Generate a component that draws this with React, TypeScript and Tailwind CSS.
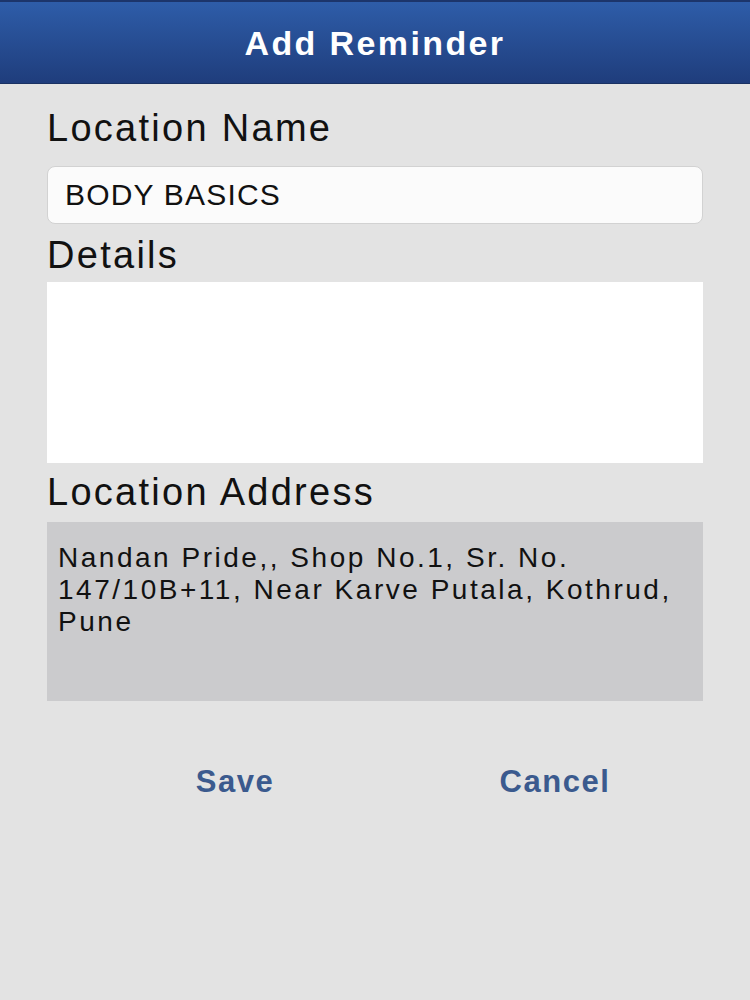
import React from 'react';

const font = { fontFamily: '"Liberation Sans", Arial, sans-serif' };

export default function App() {
  return (
    <div className="min-h-screen h-[1000px] w-full bg-[#e3e3e3] text-[#111]" style={font}>
      {/* Title bar */}
      <header className="h-[84px] flex items-center justify-center border-t-2 border-t-[#1c356b] border-b border-b-[#1a3263] bg-gradient-to-b from-[#2e5da9] to-[#1f3d7c]">
        <h1 className="text-[34px] leading-none font-bold tracking-[0.07em] text-white">Add Reminder</h1>
      </header>

      <main className="px-[47px]">
        <label className="block mt-[25px] text-[38px] leading-none tracking-[0.06em]">Location Name</label>
        <div className="mt-[19px] h-[58px] flex items-center pl-[17px] rounded-[8px] bg-[#fbfbfb] border border-[#d2d2d2]">
          <span className="text-[30px] leading-none tracking-[0.04em]">BODY BASICS</span>
        </div>

        <label className="block mt-[12px] text-[38px] leading-none tracking-[0.06em]">Details</label>
        <div className="mt-[8px] h-[181px] bg-white" />

        <label className="block mt-[10px] text-[38px] leading-none tracking-[0.06em]">Location Address</label>
        <div className="mt-[11px] h-[179px] bg-[#cbcbcd] pl-[11px] pr-[6px] pt-[20px]">
          <p className="text-[28px] leading-[32px] tracking-[0.09em]">
            Nandan Pride,, Shop No.1, Sr. No. 147/10B+11, Near Karve Putala, Kothrud, Pune
          </p>
        </div>
      </main>

      <div className="flex pl-[75px] pr-[35px] mt-[65px]">
        <button className="flex-1 text-center text-[31px] leading-none font-bold tracking-[0.05em] text-[#3b5a8e]">
          Save
        </button>
        <button className="flex-1 text-center text-[31px] leading-none font-bold tracking-[0.05em] text-[#3b5a8e]">
          Cancel
        </button>
      </div>
    </div>
  );
}
